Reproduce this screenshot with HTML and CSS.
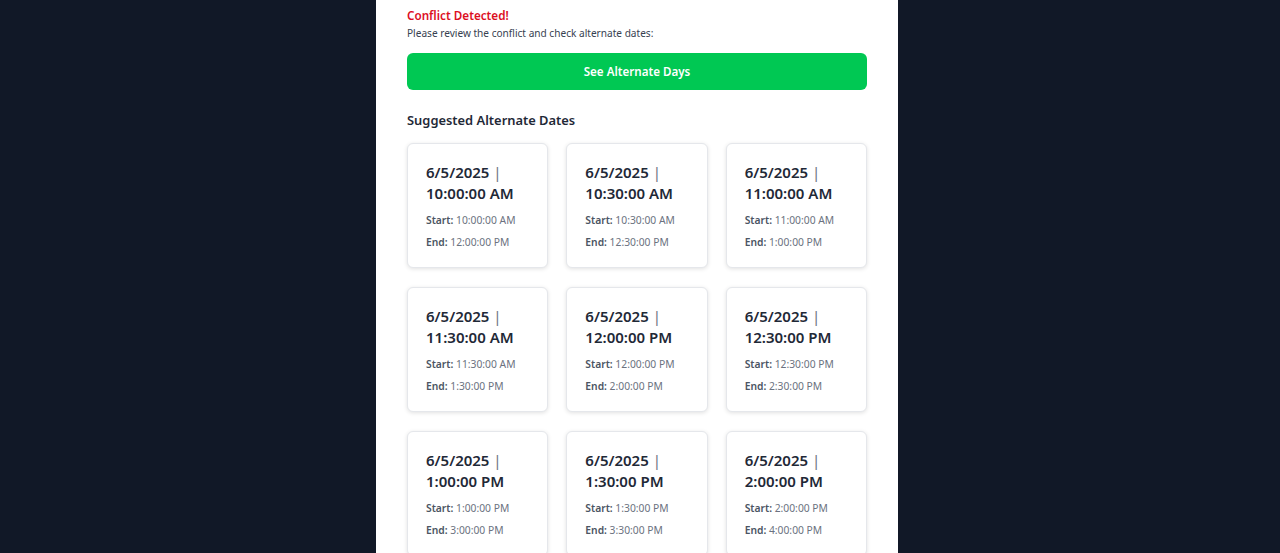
FILE: index.html
```html
<!DOCTYPE html>
<html lang="en">
<head>
<meta charset="utf-8">
<title>Conflict Detected</title>
<link rel="stylesheet" href="styles.css">
</head>
<body>
<main class="panel">
  <h2 class="conflict-title">Conflict Detected!</h2>
  <p class="conflict-text">Please review the conflict and check alternate dates:</p>
  <button class="alt-btn">See Alternate Days</button>
  <h3 class="section-title">Suggested Alternate Dates</h3>
  <div class="grid">
    <div class="card"><div class="card-title">6/5/2025 <span class="sep">|</span><br>10:00:00 AM</div><p class="line"><b>Start:</b> 10:00:00 AM</p><p class="line"><b>End:</b> 12:00:00 PM</p></div>
    <div class="card"><div class="card-title">6/5/2025 <span class="sep">|</span><br>10:30:00 AM</div><p class="line"><b>Start:</b> 10:30:00 AM</p><p class="line"><b>End:</b> 12:30:00 PM</p></div>
    <div class="card"><div class="card-title">6/5/2025 <span class="sep">|</span><br>11:00:00 AM</div><p class="line"><b>Start:</b> 11:00:00 AM</p><p class="line"><b>End:</b> 1:00:00 PM</p></div>
    <div class="card"><div class="card-title">6/5/2025 <span class="sep">|</span><br>11:30:00 AM</div><p class="line"><b>Start:</b> 11:30:00 AM</p><p class="line"><b>End:</b> 1:30:00 PM</p></div>
    <div class="card"><div class="card-title">6/5/2025 <span class="sep">|</span><br>12:00:00 PM</div><p class="line"><b>Start:</b> 12:00:00 PM</p><p class="line"><b>End:</b> 2:00:00 PM</p></div>
    <div class="card"><div class="card-title">6/5/2025 <span class="sep">|</span><br>12:30:00 PM</div><p class="line"><b>Start:</b> 12:30:00 PM</p><p class="line"><b>End:</b> 2:30:00 PM</p></div>
    <div class="card"><div class="card-title">6/5/2025 <span class="sep">|</span><br>1:00:00 PM</div><p class="line"><b>Start:</b> 1:00:00 PM</p><p class="line"><b>End:</b> 3:00:00 PM</p></div>
    <div class="card"><div class="card-title">6/5/2025 <span class="sep">|</span><br>1:30:00 PM</div><p class="line"><b>Start:</b> 1:30:00 PM</p><p class="line"><b>End:</b> 3:30:00 PM</p></div>
    <div class="card"><div class="card-title">6/5/2025 <span class="sep">|</span><br>2:00:00 PM</div><p class="line"><b>Start:</b> 2:00:00 PM</p><p class="line"><b>End:</b> 4:00:00 PM</p></div>
  </div>
</main>
</body>
</html>
```

FILE: styles.css
```css
* { box-sizing: border-box; }
html, body { margin: 0; padding: 0; }
body {
  background: #111827;
  font-family: "Noto Sans", "Open Sans", sans-serif;
  color: #1f2937;
  height: 553px;
  overflow: hidden;
  padding-right: 6px;
}
.panel {
  width: 522px;
  margin: 0 auto;
  background: #ffffff;
  min-height: 553px;
  padding: 7px 31px 0;
}
.conflict-title {
  margin: 0;
  font-size: 11.7px;
  line-height: 17px;
  font-weight: 600;
  color: #dc0f1f;
}
.conflict-text {
  margin: 0;
  font-size: 10.1px;
  line-height: 18px;
  color: #374151;
}
.alt-btn {
  display: block;
  width: 100%;
  height: 37px;
  margin-top: 11px;
  border: none;
  border-radius: 6px;
  background: #00c853;
  color: #ffffff;
  font-family: inherit;
  font-size: 11.6px;
  font-weight: 600;
}
.section-title {
  margin: 20px 0 0;
  font-size: 12.9px;
  line-height: 20px;
  font-weight: 600;
  color: #1f2937;
}
.grid {
  margin-top: 13px;
  display: grid;
  grid-template-columns: repeat(3, 1fr);
  gap: 19px 18px;
}
.card {
  height: 125px;
  border: 1px solid #e5e7eb;
  border-radius: 6px;
  box-shadow: 0 1px 4px rgba(0, 0, 0, 0.12);
  padding: 18px 18px 0;
  background: #fff;
}
.card-title {
  font-size: 15px;
  line-height: 21px;
  font-weight: 600;
  color: #1f2937;
}
.sep { color: #6b7280; font-weight: 400; }
.line {
  margin: 6px 0 0;
  font-size: 10.3px;
  line-height: 16px;
  color: #6b7280;
}
.card-title + .line { margin-top: 8px; }
.line b { font-weight: 600; color: #4b5563; }
```
